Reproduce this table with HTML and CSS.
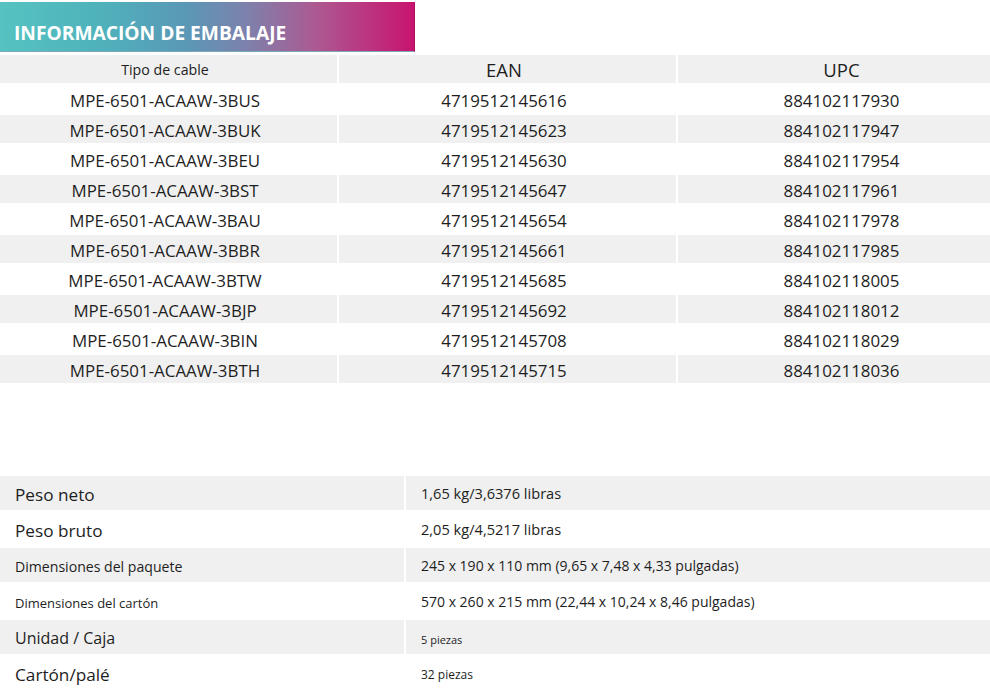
FILE: index.html
```html
<!DOCTYPE html>
<html lang="es">
<head>
<meta charset="utf-8">
<title>Información de embalaje</title>
<link rel="stylesheet" href="styles.css">
</head>
<body>
<div class="banner"><h1>INFORMACIÓN DE EMBALAJE</h1></div>
<div class="codes">
  <div class="cell head small">Tipo de cable</div>
  <div class="cell head">EAN</div>
  <div class="cell head">UPC</div>

  <div class="cell">MPE-6501-ACAAW-3BUS</div><div class="cell">4719512145616</div><div class="cell">884102117930</div>
  <div class="cell g">MPE-6501-ACAAW-3BUK</div><div class="cell g">4719512145623</div><div class="cell g">884102117947</div>
  <div class="cell">MPE-6501-ACAAW-3BEU</div><div class="cell">4719512145630</div><div class="cell">884102117954</div>
  <div class="cell g">MPE-6501-ACAAW-3BST</div><div class="cell g">4719512145647</div><div class="cell g">884102117961</div>
  <div class="cell">MPE-6501-ACAAW-3BAU</div><div class="cell">4719512145654</div><div class="cell">884102117978</div>
  <div class="cell g">MPE-6501-ACAAW-3BBR</div><div class="cell g">4719512145661</div><div class="cell g">884102117985</div>
  <div class="cell">MPE-6501-ACAAW-3BTW</div><div class="cell">4719512145685</div><div class="cell">884102118005</div>
  <div class="cell g">MPE-6501-ACAAW-3BJP</div><div class="cell g">4719512145692</div><div class="cell g">884102118012</div>
  <div class="cell">MPE-6501-ACAAW-3BIN</div><div class="cell">4719512145708</div><div class="cell">884102118029</div>
  <div class="cell g">MPE-6501-ACAAW-3BTH</div><div class="cell g">4719512145715</div><div class="cell g">884102118036</div>
</div>

<div class="specs">
  <div class="lab g l17">Peso neto</div><div class="val g v145">1,65 kg/3,6376 libras</div>
  <div class="lab l17">Peso bruto</div><div class="val v145">2,05 kg/4,5217 libras</div>
  <div class="lab g l14">Dimensiones del paquete</div><div class="val g v14">245 x 190 x 110 mm (9,65 x 7,48 x 4,33 pulgadas)</div>
  <div class="lab l13">Dimensiones del cartón</div><div class="val v14">570 x 260 x 215 mm (22,44 x 10,24 x 8,46 pulgadas)</div>
  <div class="lab g l16">Unidad / Caja</div><div class="val g v11">5 piezas</div>
  <div class="lab l17">Cartón/palé</div><div class="val v12">32 piezas</div>
</div>
</body>
</html>
```

FILE: styles.css
```css
html {
  overflow: hidden;
}
html, body {
  margin: 0;
  padding: 0;
  background: #ffffff;
}
body {
  font-family: "Open Sans", "Noto Sans", sans-serif;
  color: #1e1e1e;
  width: 990px;
}
.banner {
  margin-top: 2px;
  width: 415px;
  height: 50px;
  box-sizing: border-box;
  background: linear-gradient(to right, #55c3c1 0%, #4fb1bb 25%, #5a98b6 45%, #7e80ab 60%, #ac5a92 76%, #c8146f 100%);
  border-right: 1px solid #b0105f;
  border-bottom: 1px solid #7aa8b8;
  display: flex;
  align-items: center;
}
.banner h1 {
  margin: 0;
  padding-left: 14px;
  padding-top: 11px;
  font-size: 19.2px;
  font-weight: 700;
  color: #ffffff;
  letter-spacing: 0;
}
.codes {
  margin-top: 3px;
  width: 1005px;
  display: grid;
  grid-template-columns: 337px 337px 1fr;
  grid-auto-rows: 28px;
  column-gap: 2px;
  row-gap: 2px;
}
.cell {
  display: flex;
  align-items: center;
  justify-content: center;
  font-size: 16.9px;
  padding-top: 2px;
  box-sizing: border-box;
}
.cell:nth-child(3n+1),
.cell:nth-child(3n+2) {
  padding-right: 7px;
}
.cell.head {
  background: #f0f0f0;
  font-size: 18.5px;
  padding-top: 0;
}
.cell.head.small {
  font-size: 14.2px;
  padding-top: 1px;
}
.cell.g {
  background: #f0f0f0;
}
.specs {
  margin-top: 93px;
  display: grid;
  grid-template-columns: 404px 1fr;
  grid-auto-rows: 34px;
  column-gap: 2px;
  row-gap: 2px;
}
.lab, .val {
  display: flex;
  align-items: center;
  box-sizing: border-box;
}
.lab {
  padding-left: 15px;
}
.val {
  padding-left: 15px;
}
.g {
  background: #f0f0f0;
}
.l17 { font-size: 17.2px; padding-top: 2px; }
.l16 { font-size: 16px; padding-top: 2px; }
.l14 { font-size: 14.1px; padding-top: 3px; }
.l13 { font-size: 13px; padding-top: 3px; }
.v145 { font-size: 14.6px; }
.v14 { font-size: 14px; }
.v11 { font-size: 11px; padding-top: 4px; }
.v12 { font-size: 12px; padding-top: 2px; }
```
